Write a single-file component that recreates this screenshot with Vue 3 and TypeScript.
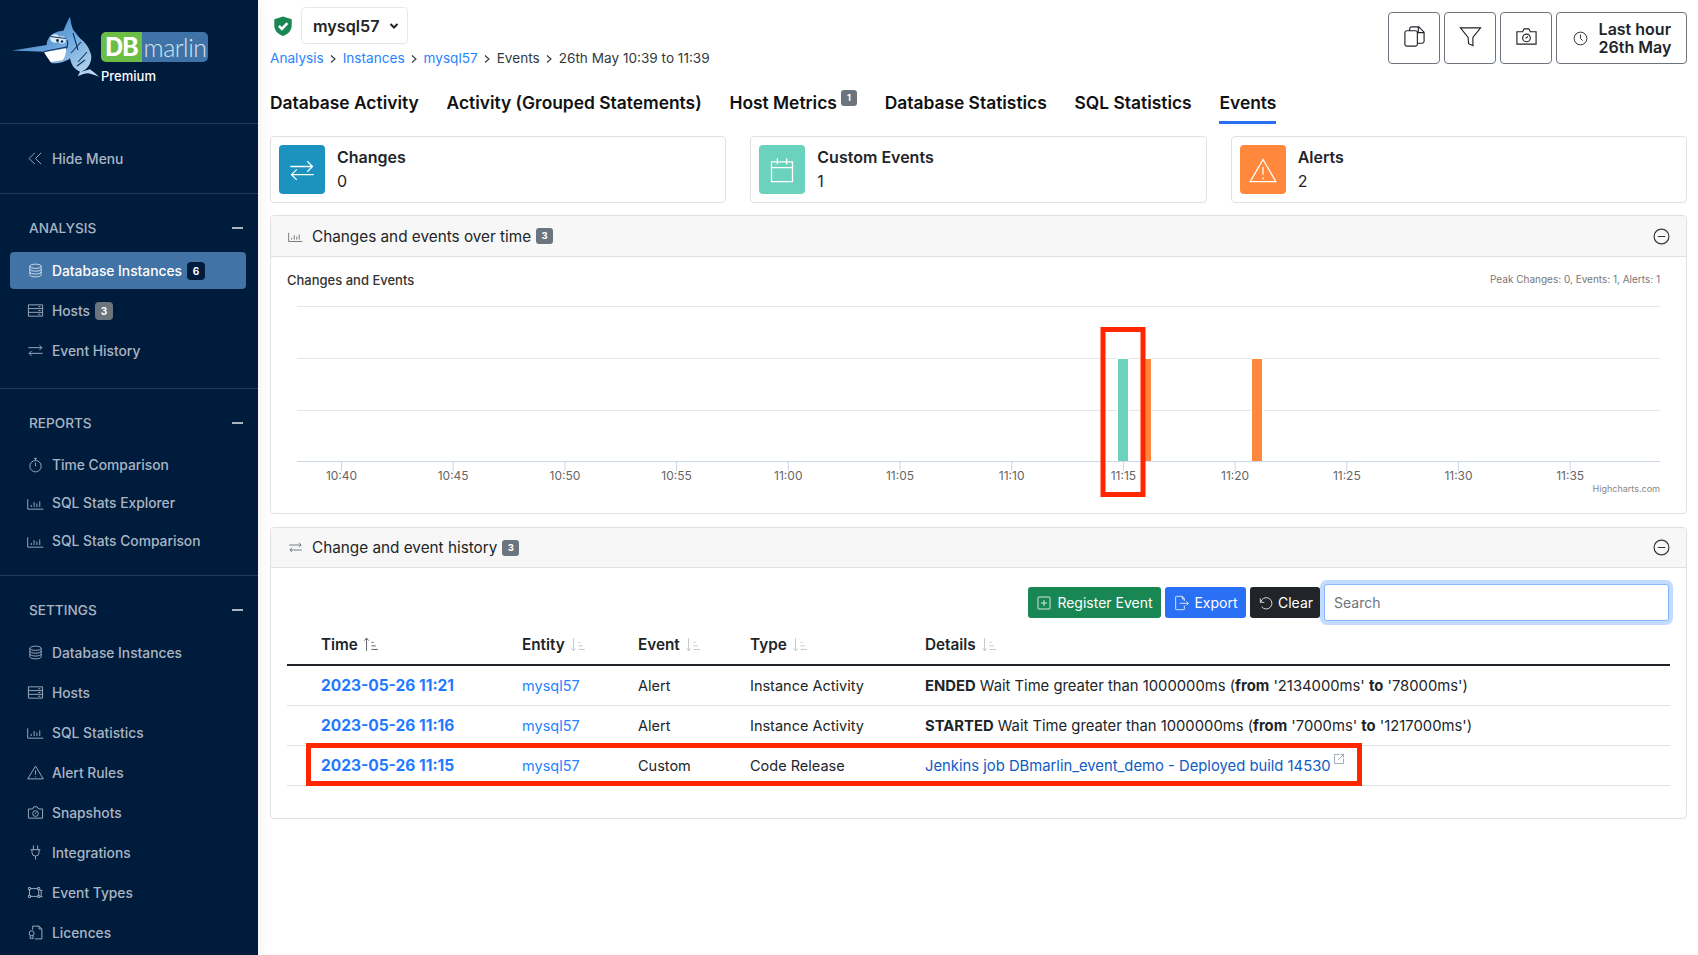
<template>
  <div class="app">
    <aside class="sidebar">
      <div class="brand">
        <svg class="fish" viewBox="10 14 92 66">
          <defs>
            <linearGradient id="fishFill" x1="0" y1="0" x2="1" y2="1">
              <stop offset="0" stop-color="#2f6db5" />
              <stop offset="0.5" stop-color="#6aa6dc" />
              <stop offset="1" stop-color="#c9e0f4" />
            </linearGradient>
          </defs>
          <path fill="url(#fishFill)" d="M12 50.500 L46.700 45 C46.500 40 50 34.500 55 32.700 C58 31 61 31 63.300 30.700 C65.500 26 67.500 21 70 16.700 C70.500 21 71.500 26 73.300 30 C76 33 78 36 80 38.300 C85 42 88.500 47 90 51.700 C91.500 55 91.500 57.500 91 60 C90 64 89 66 86.700 68.300 C85 70 83 71 81 71.700 C84 71 87 70 90 69.300 C93 71.500 96 74 99 76.700 C95.500 75.500 92 74 88.300 73.300 C84.500 73.500 81 75 77.700 76 C78.500 74.500 79.500 73 80 71.700 C77.500 70.500 75.500 69 73.300 66.700 C71.500 64 70.500 61 70 58.300 C68 60 66 61 63.300 61.700 C59.500 63 55.500 63.500 51.700 63.300 C49 60 47 56 45 51.700 Z" />
          <path fill="#fff" d="M44 52.300 L66 48.500 C66.500 53 65 57 62.500 60.300 L50.500 62 C48.500 59 46 55.500 44 52.300 Z" />
          <ellipse cx="55" cy="38.500" rx="4.800" ry="4.200" fill="#dce9f5" />
          <ellipse cx="62" cy="40" rx="3.800" ry="3.800" fill="#dce9f5" />
          <circle cx="57.500" cy="40.500" r="1.400" fill="#0c2a52" />
          <circle cx="62" cy="41.500" r="1.300" fill="#0c2a52" />
          <path fill="none" stroke="#12345f" stroke-width="1.100" d="M50.500 36.500 L66 38.500 M44 51.500 L68 46.700 M66 48.500 C68 45 68 42 67 40 M73 33 L78 50 M81 42 L71 53 M87 52 L78 62 M77 66 L85 60" />
        </svg>
        <div class="brand-text">
          <div class="logo-badge"><span class="logo-db">DB</span><span class="logo-marlin">marlin</span></div>
          <div class="premium">Premium</div>
        </div>
      </div>

      <div class="hide-menu">
        <svg class="ic" viewBox="0 0 24 24"><path :d="icons.chev" /></svg>
        <span>Hide Menu</span>
      </div>

      <section v-for="group in nav" :key="group.title" class="nav-group" :class="{ tight: group.tight }">
        <div class="nav-title"><span>{{ group.title }}</span><i class="dash"></i></div>
        <ul class="nav-list">
          <li v-for="item in group.items" :key="item.label" class="nav-item" :class="{ active: item.active }">
            <svg class="ic" viewBox="0 0 24 24"><path :d="icons[item.icon]" /></svg>
            <span>{{ item.label }}</span>
            <b v-if="item.badge" class="side-badge" :class="{ dark: item.active }">{{ item.badge }}</b>
          </li>
        </ul>
      </section>
    </aside>

    <main class="main">
      <header class="topbar">
        <div>
          <div class="instance-row">
            <svg class="shield" viewBox="0 0 24 24">
              <path fill="#198754" d="M12 1.500l9.500 3.200v6.500c0 5.800-3.900 9.800-9.500 11.800-5.600-2-9.500-6-9.500-11.800V4.700z" />
              <path fill="none" stroke="#fff" stroke-width="2.800" d="M7.500 11.800l3.300 3.300 6-6.200" />
            </svg>
            <div class="instance-select">
              <span>mysql57</span>
              <svg class="caret" viewBox="0 0 12 12"><path d="M2.500 4l3.500 3.500L9.500 4" /></svg>
            </div>
          </div>
          <nav class="crumbs">
            <template v-for="(crumb, i) in crumbs" :key="crumb.label">
              <a v-if="crumb.link">{{ crumb.label }}</a>
              <span v-else>{{ crumb.label }}</span>
              <svg v-if="i < crumbs.length - 1" class="crumb-sep" viewBox="0 0 10 10"><path d="M3 1.500L7 5 3 8.500" /></svg>
            </template>
          </nav>
        </div>
        <div class="actions">
          <button class="act"><svg class="act-ic" viewBox="0 0 24 24"><path :d="icons.copy" /></svg></button>
          <button class="act"><svg class="act-ic" viewBox="0 0 24 24"><path :d="icons.funnel" /></svg></button>
          <button class="act"><svg class="act-ic" viewBox="0 0 24 24"><path :d="icons.camera" /></svg></button>
          <button class="act act-time">
            <svg class="clock" viewBox="0 0 24 24"><path :d="icons.clock" /></svg>
            <span>Last hour<br />26th May</span>
          </button>
        </div>
      </header>

      <div class="tabs">
        <div v-for="tab in tabs" :key="tab.label" class="tab" :class="{ current: tab.current }">
          {{ tab.label }}<sup v-if="tab.badge" class="tab-badge">{{ tab.badge }}</sup>
        </div>
      </div>

      <div class="cards">
        <div v-for="card in cards" :key="card.title" class="card">
          <div class="card-icon" :style="{ background: card.color }">
            <svg viewBox="0 0 24 24"><path :d="icons[card.icon]" /></svg>
          </div>
          <div class="card-text">
            <div class="card-title">{{ card.title }}</div>
            <div class="card-value">{{ card.value }}</div>
          </div>
        </div>
      </div>

      <section class="panel chart-panel">
        <div class="panel-head">
          <svg class="head-ic" viewBox="0 0 24 24"><path :d="icons.chart" /></svg>
          <span>Changes and events over time</span>
          <b class="count">3</b>
          <svg class="collapse" viewBox="0 0 16 16"><circle cx="8" cy="8" r="7" /><path d="M4.500 8h7" /></svg>
        </div>
        <svg class="chart" viewBox="271 257 1415 255">
          <text x="287" y="285" class="chart-title">Changes and Events</text>
          <text x="1660" y="283" class="chart-peak" text-anchor="end">Peak Changes: 0, Events: 1, Alerts: 1</text>
          <line v-for="y in [306.5, 358.5, 410.5]" :key="y" x1="297" x2="1660" :y1="y" :y2="y" class="grid-line" />
          <rect v-for="bar in bars" :key="bar.x" :x="bar.x - 1" y="358" :width="bar.w + 2" height="103" fill="#fff" />
          <rect v-for="bar in bars" :key="'b' + bar.x" :x="bar.x" y="359" :width="bar.w" height="102" :fill="bar.color" />
          <line x1="297" x2="1660" y1="461.5" y2="461.5" class="axis-line" />
          <g v-for="tick in ticks" :key="tick.label">
            <line :x1="tick.x" :x2="tick.x" y1="461" y2="471" class="axis-line" />
            <text :x="tick.x" y="480" class="tick-label" text-anchor="middle">{{ tick.label }}</text>
          </g>
          <text x="1660" y="492" class="chart-credit" text-anchor="end">Highcharts.com</text>
          <rect x="1103" y="329.500" width="40" height="165" class="mark" />
        </svg>
      </section>

      <section class="panel history-panel">
        <div class="panel-head">
          <svg class="head-ic" viewBox="0 0 24 24"><path :d="icons.swap" /></svg>
          <span>Change and event history</span>
          <b class="count">3</b>
          <svg class="collapse" viewBox="0 0 16 16"><circle cx="8" cy="8" r="7" /><path d="M4.500 8h7" /></svg>
        </div>
        <div class="history-body">
          <div class="toolbar">
            <button class="btn green"><svg viewBox="0 0 24 24"><path :d="icons.plusBox" /></svg>Register Event</button>
            <button class="btn blue"><svg viewBox="0 0 24 24"><path :d="icons.exportDoc" /></svg>Export</button>
            <button class="btn black"><svg viewBox="0 0 24 24"><path :d="icons.undo" /></svg>Clear</button>
            <input class="search" type="text" placeholder="Search" />
          </div>
          <table class="events">
            <colgroup>
              <col class="c-time" /><col class="c-entity" /><col class="c-event" /><col class="c-type" /><col />
            </colgroup>
            <thead>
              <tr>
                <th v-for="(col, i) in columns" :key="col">
                  {{ col }}
                  <svg class="sort" :class="{ on: i === 0 }" viewBox="0 0 24 24"><path :d="i === 0 ? icons.sortUp : icons.sortDown" /></svg>
                </th>
              </tr>
            </thead>
            <tbody>
              <tr v-for="row in rows" :key="row.time">
                <td><a class="time-link">{{ row.time }}</a></td>
                <td><a class="entity-link">mysql57</a></td>
                <td>{{ row.event }}</td>
                <td>{{ row.type }}</td>
                <td class="detail">
                  <template v-if="row.state">
                    <strong>{{ row.state }}</strong> Wait Time greater than 1000000ms (<strong>from</strong> '{{ row.from }}' <strong>to</strong> '{{ row.to }}')
                  </template>
                  <a v-else class="detail-link">{{ row.link }}<svg class="ext" viewBox="0 0 24 24"><path :d="icons.external" /></svg></a>
                </td>
              </tr>
            </tbody>
          </table>
          <div class="row-mark"></div>
        </div>
      </section>
    </main>
  </div>
</template>

<script setup lang="ts">
const icons: Record<string, string> = {
  chev: 'M11 4l-8 8 8 8M20 4l-8 8 8 8',
  db: 'M4 6c0-1.700 3.600-3 8-3s8 1.300 8 3-3.600 3-8 3-8-1.300-8-3zM4 6v12c0 1.700 3.600 3 8 3s8-1.300 8-3V6M4 10c0 1.700 3.600 3 8 3s8-1.300 8-3M4 14c0 1.700 3.600 3 8 3s8-1.300 8-3',
  server: 'M2 4h20v16H2zM2 9.300h20M2 14.600h20M16 6.700h3M16 12h3M16 17.300h3',
  swap: 'M2 8h19M17.500 4.500L21 8l-3.500 3.500M22 16H3M6.500 12.500L3 16l3.500 3.500',
  watch: 'M4 13a8 8 0 1 0 16 0a8 8 0 1 0-16 0M10 2h4M12 2v3M12 13V8',
  chart: 'M1 6v14h22M6 17v-3M10 17V10M14 17v-5M18 17V9',
  warn: 'M12 3L1 21h22zM12 9v6M12 17.500v1',
  camera: 'M2 7h6l1.500-3h5L16 7h6v13H2zM8 13.500a4 4 0 1 0 8 0a4 4 0 1 0-8 0M11 14l2.500-2',
  plug: 'M9 2v6M15 2v6M5 8h14M7 8v4a5 5 0 0 0 10 0V8M12 17v5',
  types: 'M2 5h3v3H2zM15 5h3v3h-3zM2 16h3v3H2zM15 16h3v3h-3zM5 6.500h10M3.500 8v8M16.500 8v8M5 17.500h10M18 9h4M20 9v9M22 18h-4',
  licence: 'M8 8V3h9l4 4v14H11M17 3v4h4M3 13a3.500 3.500 0 1 0 7 0a3.500 3.500 0 1 0-7 0M4.500 16v5l2-1 2 1v-5',
  copy: 'M7 6V4a2 2 0 0 1 2-2h7.500L22 7.500V17a2 2 0 0 1-2 2h-5M16 2v6h6M4 6h9a2 2 0 0 1 2 2v12a2 2 0 0 1-2 2H4a2 2 0 0 1-2-2V8a2 2 0 0 1 2-2z',
  funnel: 'M1.500 3h21l-8 10v8.500l-4.500-2-.5-6.500z',
  clock: 'M3 12a9 9 0 1 0 18 0a9 9 0 1 0-18 0M12 6.500V12l3 3',
  swapWide: 'M2 9h19M16.500 4.500L21 9l-4.500 4.500M22 16H3M7.500 11.500L3 16l4.500 4.500',
  calendar: 'M3 5h18v17H3zM3 10h18M8 2v5M16 2v5',
  warnBig: 'M12 3L1 22h22zM12 9.500v6.500M12 18.500v1.500',
  plusBox: 'M4 3h16a1 1 0 0 1 1 1v16a1 1 0 0 1-1 1H4a1 1 0 0 1-1-1V4a1 1 0 0 1 1-1zM12 7.500v9M7.500 12h9',
  exportDoc: 'M14 2H5a1 1 0 0 0-1 1v18a1 1 0 0 0 1 1h11a1 1 0 0 0 1-1v-5M14 2l3 3.500V9M14 2v4h3M10 12.500h13M20 9.500l3 3-3 3',
  undo: 'M5 5v6h6M5.500 11A8.500 8.500 0 1 1 7 17.500',
  sortUp: 'M5 3v18M2 6.500L5 3l3 3.500M12 9h3M12 14h6M12 19h9',
  sortDown: 'M5 3v18M2 17.500L5 21l3-3.500M12 9h3M12 14h6M12 19h9',
  external: 'M13 3H3v18h18V11M10 14L21 3M15 3h6v6',
}

interface NavItem { label: string; icon: string; badge?: number; active?: boolean }
interface NavGroup { title: string; tight?: boolean; items: NavItem[] }

const nav: NavGroup[] = [
  {
    title: 'ANALYSIS',
    items: [
      { label: 'Database Instances', icon: 'db', badge: 6, active: true },
      { label: 'Hosts', icon: 'server', badge: 3 },
      { label: 'Event History', icon: 'swap' },
    ],
  },
  {
    title: 'REPORTS',
    tight: true,
    items: [
      { label: 'Time Comparison', icon: 'watch' },
      { label: 'SQL Stats Explorer', icon: 'chart' },
      { label: 'SQL Stats Comparison', icon: 'chart' },
    ],
  },
  {
    title: 'SETTINGS',
    items: [
      { label: 'Database Instances', icon: 'db' },
      { label: 'Hosts', icon: 'server' },
      { label: 'SQL Statistics', icon: 'chart' },
      { label: 'Alert Rules', icon: 'warn' },
      { label: 'Snapshots', icon: 'camera' },
      { label: 'Integrations', icon: 'plug' },
      { label: 'Event Types', icon: 'types' },
      { label: 'Licences', icon: 'licence' },
    ],
  },
]

const crumbs = [
  { label: 'Analysis', link: true },
  { label: 'Instances', link: true },
  { label: 'mysql57', link: true },
  { label: 'Events', link: false },
  { label: '26th May 10:39 to 11:39', link: false },
]

const tabs = [
  { label: 'Database Activity' },
  { label: 'Activity (Grouped Statements)' },
  { label: 'Host Metrics', badge: 1 },
  { label: 'Database Statistics' },
  { label: 'SQL Statistics' },
  { label: 'Events', current: true },
]

const cards = [
  { title: 'Changes', value: 0, color: '#1b92c0', icon: 'swapWide' },
  { title: 'Custom Events', value: 1, color: '#6bd3bd', icon: 'calendar' },
  { title: 'Alerts', value: 2, color: '#ff883c', icon: 'warnBig' },
]

const tickLabels = ['10:40', '10:45', '10:50', '10:55', '11:00', '11:05', '11:10', '11:15', '11:20', '11:25', '11:30', '11:35']
const ticks = tickLabels.map((label, i) => ({ label, x: 341.5 + i * 111.7 }))

const bars = [
  { x: 1118, w: 10, color: '#6bd3bd' },
  { x: 1141, w: 10, color: '#ff883c' },
  { x: 1252, w: 10, color: '#ff883c' },
]

const columns = ['Time', 'Entity', 'Event', 'Type', 'Details']

const rows = [
  { time: '2023-05-26 11:21', event: 'Alert', type: 'Instance Activity', state: 'ENDED', from: '2134000ms', to: '78000ms' },
  { time: '2023-05-26 11:16', event: 'Alert', type: 'Instance Activity', state: 'STARTED', from: '7000ms', to: '1217000ms' },
  { time: '2023-05-26 11:15', event: 'Custom', type: 'Code Release', link: 'Jenkins job DBmarlin_event_demo - Deployed build 14530' },
]
</script>

<style>
html,
body {
  margin: 0;
  background: #fff;
}
</style>

<style scoped>
.app {
  display: flex;
  height: 955px;
  overflow: hidden;
  font-family: Inter, "Liberation Sans", sans-serif;
  color: #212529;
}

.sidebar {
  width: 258px;
  flex: none;
  background: #001c3d;
  color: #aab5c3;
  font-size: 13.800px;
  font-weight: 500;
  box-shadow: 2px 0 14px rgba(0, 0, 0, 0.06);
}

.brand {
  height: 124px;
  box-sizing: border-box;
  border-bottom: 1px solid #1f3a5c;
  display: flex;
  align-items: flex-start;
  padding: 14px 0 0 10px;
}

.fish {
  width: 92px;
  height: 66px;
  flex: none;
}

.brand-text {
  margin: 18px 0 0 -1px;
}

.logo-badge {
  display: flex;
  width: 107px;
  height: 30px;
  border-radius: 5px;
  overflow: hidden;
  line-height: 30px;
}

.logo-db {
  width: 41px;
  background: #6cbd45;
  color: #fff;
  text-align: center;
  font-size: 25px;
  font-weight: 700;
  letter-spacing: -1px;
}

.logo-marlin {
  flex: 1;
  background: #3f72a6;
  color: #d5e2ee;
  text-align: center;
  font-family: Lato, Inter, sans-serif;
  font-size: 25px;
  font-weight: 300;
  letter-spacing: -0.5px;
}

.premium {
  margin-top: 5px;
  color: #fff;
  font-size: 13px;
  font-weight: 500;
  line-height: 18px;
}

.hide-menu {
  height: 70px;
  box-sizing: border-box;
  border-bottom: 1px solid #1f3a5c;
  display: flex;
  align-items: center;
  gap: 8px;
  padding-left: 27px;
}

.ic {
  width: 17px;
  height: 17px;
  flex: none;
  fill: none;
  stroke: #a3b1c2;
  stroke-width: 1.300;
}

.nav-group {
  border-bottom: 1px solid #1f3a5c;
  padding: 24px 0 19px;
}

.nav-group.tight {
  padding: 24px 0 16px;
}

.nav-group:last-child {
  border-bottom: none;
}

.nav-title {
  display: flex;
  justify-content: space-between;
  align-items: center;
  height: 20px;
  padding: 0 15px 0 29px;
  font-size: 13.600px;
}

.dash {
  width: 11px;
  height: 1.500px;
  background: #aab5c3;
}

.nav-list {
  list-style: none;
  margin: 14px 12px 0 10px;
  padding: 0;
  display: flex;
  flex-direction: column;
  gap: 3px;
}

.tight .nav-list {
  gap: 2px;
}

.nav-item {
  height: 37px;
  display: flex;
  align-items: center;
  gap: 8px;
  padding-left: 17px;
  border-radius: 4px;
}

.tight .nav-item {
  height: 36px;
}

.nav-item.active {
  background: #4173a6;
  color: #fff;
}

.nav-item.active .ic {
  stroke: #d9e3ee;
}

.side-badge {
  width: 18px;
  height: 18px;
  margin-left: -3px;
  border-radius: 4px;
  background: #6c757d;
  color: #fff;
  font-size: 10px;
  font-weight: 700;
  line-height: 18px;
  text-align: center;
}

.side-badge.dark {
  background: #001c3d;
}

.main {
  flex: 1;
  min-width: 0;
  padding: 7px 11px 0 12px;
}

.topbar {
  display: flex;
  justify-content: space-between;
  height: 84px;
}

.instance-row {
  display: flex;
  align-items: center;
  gap: 7px;
  padding-left: 2px;
}

.shield {
  width: 22px;
  height: 22px;
}

.instance-select {
  width: 107px;
  height: 37px;
  box-sizing: border-box;
  border: 1px solid #e6e9ec;
  border-radius: 4px;
  display: flex;
  align-items: center;
  gap: 8px;
  padding-left: 11px;
  font-size: 16.200px;
  font-weight: 600;
}

.caret {
  width: 12px;
  height: 12px;
  fill: none;
  stroke: #212529;
  stroke-width: 2;
}

.crumbs {
  margin-top: 6px;
  display: flex;
  align-items: center;
  font-size: 13.600px;
  line-height: 17px;
  color: #343a40;
}

.crumbs a {
  color: #2684ff;
}

.crumb-sep {
  width: 10px;
  height: 10px;
  margin: 1px 4.500px 0;
  fill: none;
  stroke: #343a40;
  stroke-width: 1.100;
}

.actions {
  display: flex;
  gap: 4px;
  margin-top: 5px;
  height: 52px;
}

.act {
  width: 52px;
  height: 52px;
  box-sizing: border-box;
  border: 1px solid #6c757d;
  border-radius: 4px;
  background: #fff;
  padding: 0;
  display: flex;
  align-items: center;
  justify-content: center;
  font-family: inherit;
  color: #212529;
}

.act-ic {
  width: 23px;
  height: 23px;
  margin-top: -4px;
  fill: none;
  stroke: #212529;
  stroke-width: 1.200;
}

.act-time {
  width: 131px;
  gap: 10px;
  font-size: 16px;
  font-weight: 600;
  line-height: 18px;
  text-align: left;
}

.clock {
  width: 17px;
  height: 17px;
  fill: none;
  stroke: #212529;
  stroke-width: 1.300;
}

.tabs {
  display: flex;
  gap: 27.800px;
  height: 33px;
}

.tab {
  font-size: 17.400px;
  font-weight: 600;
  line-height: 24px;
  color: #111;
  height: 30px;
}

.tab.current {
  border-bottom: 3px solid #2a70f5;
}

.tab-badge {
  display: inline-block;
  width: 16px;
  height: 16px;
  margin-left: 4px;
  vertical-align: middle;
  transform: translateY(-6px);
  border-radius: 3px;
  background: #6c757d;
  color: #fff;
  font-size: 9px;
  font-weight: 700;
  line-height: 16px;
  text-align: center;
}

.cards {
  display: grid;
  grid-template-columns: repeat(3, 1fr);
  gap: 24px;
  margin-top: 12px;
}

.card {
  height: 67px;
  box-sizing: border-box;
  border: 1px solid #dee2e6;
  border-radius: 4px;
  display: flex;
  align-items: center;
  gap: 12px;
  padding: 0 8px;
}

.card-text {
  padding-bottom: 2px;
}

.card-icon {
  width: 46px;
  height: 49px;
  border-radius: 4px;
  display: flex;
  align-items: center;
  justify-content: center;
}

.card-icon svg {
  width: 28px;
  height: 28px;
  fill: none;
  stroke: #fff;
  stroke-width: 1.100;
}

.card-title {
  font-size: 16px;
  font-weight: 600;
  line-height: 24px;
}

.card-value {
  font-size: 16px;
  line-height: 24px;
}

.panel {
  border: 1px solid #dee2e6;
  border-radius: 4px;
  box-sizing: border-box;
  overflow: hidden;
}

.chart-panel {
  height: 299px;
  margin-top: 12px;
}

.history-panel {
  height: 292px;
  margin-top: 13px;
}

.panel-head {
  height: 41px;
  box-sizing: border-box;
  background: #f7f7f7;
  border-bottom: 1px solid #dee2e6;
  display: flex;
  align-items: center;
  padding: 0 16px 0 17px;
  font-size: 15.300px;
}

.history-panel .panel-head {
  height: 40px;
}

.head-ic {
  width: 15px;
  height: 15px;
  margin-right: 9px;
  fill: none;
  stroke: #5c636a;
  stroke-width: 1.300;
}

.count {
  width: 17px;
  height: 16px;
  margin-left: 5px;
  border-radius: 3px;
  background: #6c757d;
  color: #fff;
  font-size: 9.500px;
  font-weight: 700;
  line-height: 16px;
  text-align: center;
}

.collapse {
  width: 17px;
  height: 17px;
  margin-left: auto;
  fill: none;
  stroke: #343a40;
  stroke-width: 1.100;
}

.chart {
  display: block;
  width: 1415px;
  height: 255px;
  font-family: Inter, "Liberation Sans", sans-serif;
}

.chart-title {
  font-size: 13px;
  font-weight: 500;
  fill: #333;
}

.chart-peak {
  font-size: 10px;
  fill: #777;
}

.tick-label {
  font-size: 12px;
  fill: #666;
}

.chart-credit {
  font-size: 9px;
  fill: #888;
}

.grid-line {
  stroke: #e6e6e6;
}

.axis-line {
  stroke: #ccd6eb;
}

.mark {
  fill: none;
  stroke: #ff2600;
  stroke-width: 5;
}

.history-body {
  position: relative;
  padding: 16px 16px 0;
}

.toolbar {
  display: flex;
  justify-content: flex-end;
  align-items: center;
  gap: 4px;
  padding-right: 1px;
}

.btn {
  height: 31px;
  box-sizing: border-box;
  border: none;
  border-radius: 3px;
  padding: 0;
  display: flex;
  align-items: center;
  justify-content: center;
  gap: 5px;
  color: #fff;
  font-family: inherit;
  font-size: 14px;
  white-space: nowrap;
}

.btn svg {
  width: 16px;
  height: 16px;
  fill: none;
  stroke: currentColor;
  stroke-width: 1.200;
}

.btn.green {
  background: #198754;
  width: 133px;
}

.btn.blue {
  background: #2a70f5;
  width: 81px;
}

.btn.black {
  background: #212529;
  width: 70px;
}

.search {
  width: 345px;
  height: 37px;
  box-sizing: border-box;
  border: 1px solid #86b7fe;
  border-radius: 3px;
  box-shadow: 0 0 0 4px rgba(13, 110, 253, 0.25);
  outline: none;
  padding: 0 9px;
  font-family: inherit;
  font-size: 14px;
}

.search::placeholder {
  color: #6c757d;
}

.events {
  width: 100%;
  margin-top: 8px;
  border-collapse: collapse;
  table-layout: fixed;
  font-size: 14.500px;
}

.c-time {
  width: 235px;
}

.c-entity {
  width: 116px;
}

.c-event {
  width: 112px;
}

.c-type {
  width: 175px;
}

.events th {
  height: 36px;
  padding: 0 0 5px;
  box-sizing: border-box;
  border-bottom: 2px solid #212529;
  text-align: left;
  font-size: 15.300px;
  font-weight: 600;
}

.events td {
  height: 39px;
  padding: 0;
  border-bottom: 1px solid #dee2e6;
}

.events td.detail {
  font-size: 14.800px;
}

.events th:first-child,
.events td:first-child {
  padding-left: 34px;
}

.sort {
  width: 17px;
  height: 17px;
  margin-left: 1px;
  vertical-align: -3px;
  fill: none;
  stroke: #b3b8bd;
  stroke-width: 1.100;
}

.sort.on {
  stroke: #343a40;
}

.time-link {
  color: #1f7aff;
  font-size: 15.500px;
  font-weight: 700;
}

.entity-link {
  color: #2684ff;
}

.detail-link {
  color: #0f5bc4;
}

.ext {
  width: 12px;
  height: 12px;
  margin-left: 2px;
  transform: translateY(-6px);
  fill: none;
  stroke: #8494a6;
  stroke-width: 1.500;
}

/* red annotation over the last table row */
.row-mark {
  position: absolute;
  left: 35px;
  top: 175px;
  width: 1056px;
  height: 43px;
  box-sizing: border-box;
  border: 5px solid #ff2600;
}
</style>
